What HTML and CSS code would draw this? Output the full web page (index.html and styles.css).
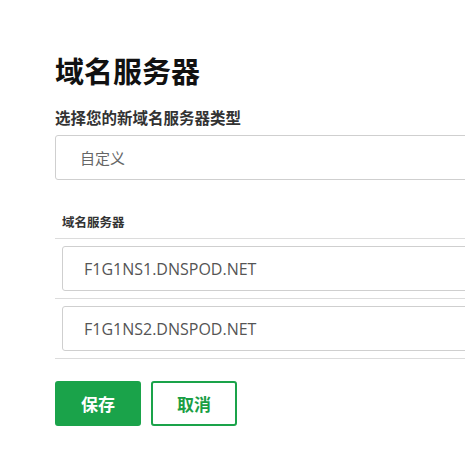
FILE: index.html
```html
<!DOCTYPE html>
<html lang="zh-CN">
<head>
<meta charset="utf-8">
<title>域名服务器</title>
<link rel="stylesheet" href="styles.css">
</head>
<body>
<div class="page">
  <h1 class="title">域名服务器</h1>
  <div class="field-label">选择您的新域名服务器类型</div>
  <div class="select">自定义</div>
  <div class="section-label">域名服务器</div>
  <ul class="ns-list">
    <li class="ns-row"><div class="ns-input">F1G1NS1.DNSPOD.NET</div></li>
    <li class="ns-row"><div class="ns-input">F1G1NS2.DNSPOD.NET</div></li>
  </ul>
  <div class="actions">
    <button class="btn btn-primary">保存</button>
    <button class="btn btn-outline">取消</button>
  </div>
</div>
</body>
</html>
```

FILE: styles.css
```css
html, body {
  margin: 0;
  padding: 0;
  background: #fff;
  overflow: hidden;
}
body {
  font-family: "Noto Sans CJK SC", "Open Sans", sans-serif;
  color: #222;
}
.page {
  width: 480px;
  padding: 50px 0 0 55px;
}
.title {
  margin: 0;
  font-size: 29px;
  line-height: 40px;
  font-weight: 700;
  color: #111;
}
.field-label {
  margin-top: 16px;
  font-size: 15.5px;
  line-height: 22px;
  font-weight: 600;
  color: #333;
}
.select {
  margin-top: 7px;
  box-sizing: border-box;
  height: 45px;
  border: 1px solid #cfcfcf;
  border-radius: 3px;
  padding-left: 24px;
  display: flex;
  align-items: center;
  font-size: 15px;
  color: #666;
}
.section-label {
  margin-top: 33px;
  padding-left: 7px;
  font-size: 12.5px;
  line-height: 18px;
  font-weight: 700;
  color: #333;
}
.ns-list {
  list-style: none;
  margin: 7px 0 0;
  padding: 0;
  border-top: 1px solid #dcdcdc;
}
.ns-row {
  padding: 7px 0 7px 7px;
  border-bottom: 1px solid #dcdcdc;
}
.ns-input {
  box-sizing: border-box;
  height: 45px;
  border: 1px solid #cfcfcf;
  border-radius: 3px;
  padding-left: 21px;
  display: flex;
  align-items: center;
  font-family: "Open Sans", sans-serif;
  font-size: 16px;
  color: #555;
}
.actions {
  margin-top: 22px;
  display: flex;
  gap: 10px;
}
.btn {
  box-sizing: border-box;
  width: 86px;
  height: 45px;
  border-radius: 3px;
  font-family: "Noto Sans CJK SC", sans-serif;
  font-size: 17px;
  font-weight: 700;
  cursor: pointer;
  padding: 0;
}
.btn-primary {
  background: #1aa34a;
  border: 2px solid #1aa34a;
  color: #fff;
}
.btn-outline {
  background: #fff;
  border: 2px solid #1aa34a;
  color: #1a9e44;
}
```
